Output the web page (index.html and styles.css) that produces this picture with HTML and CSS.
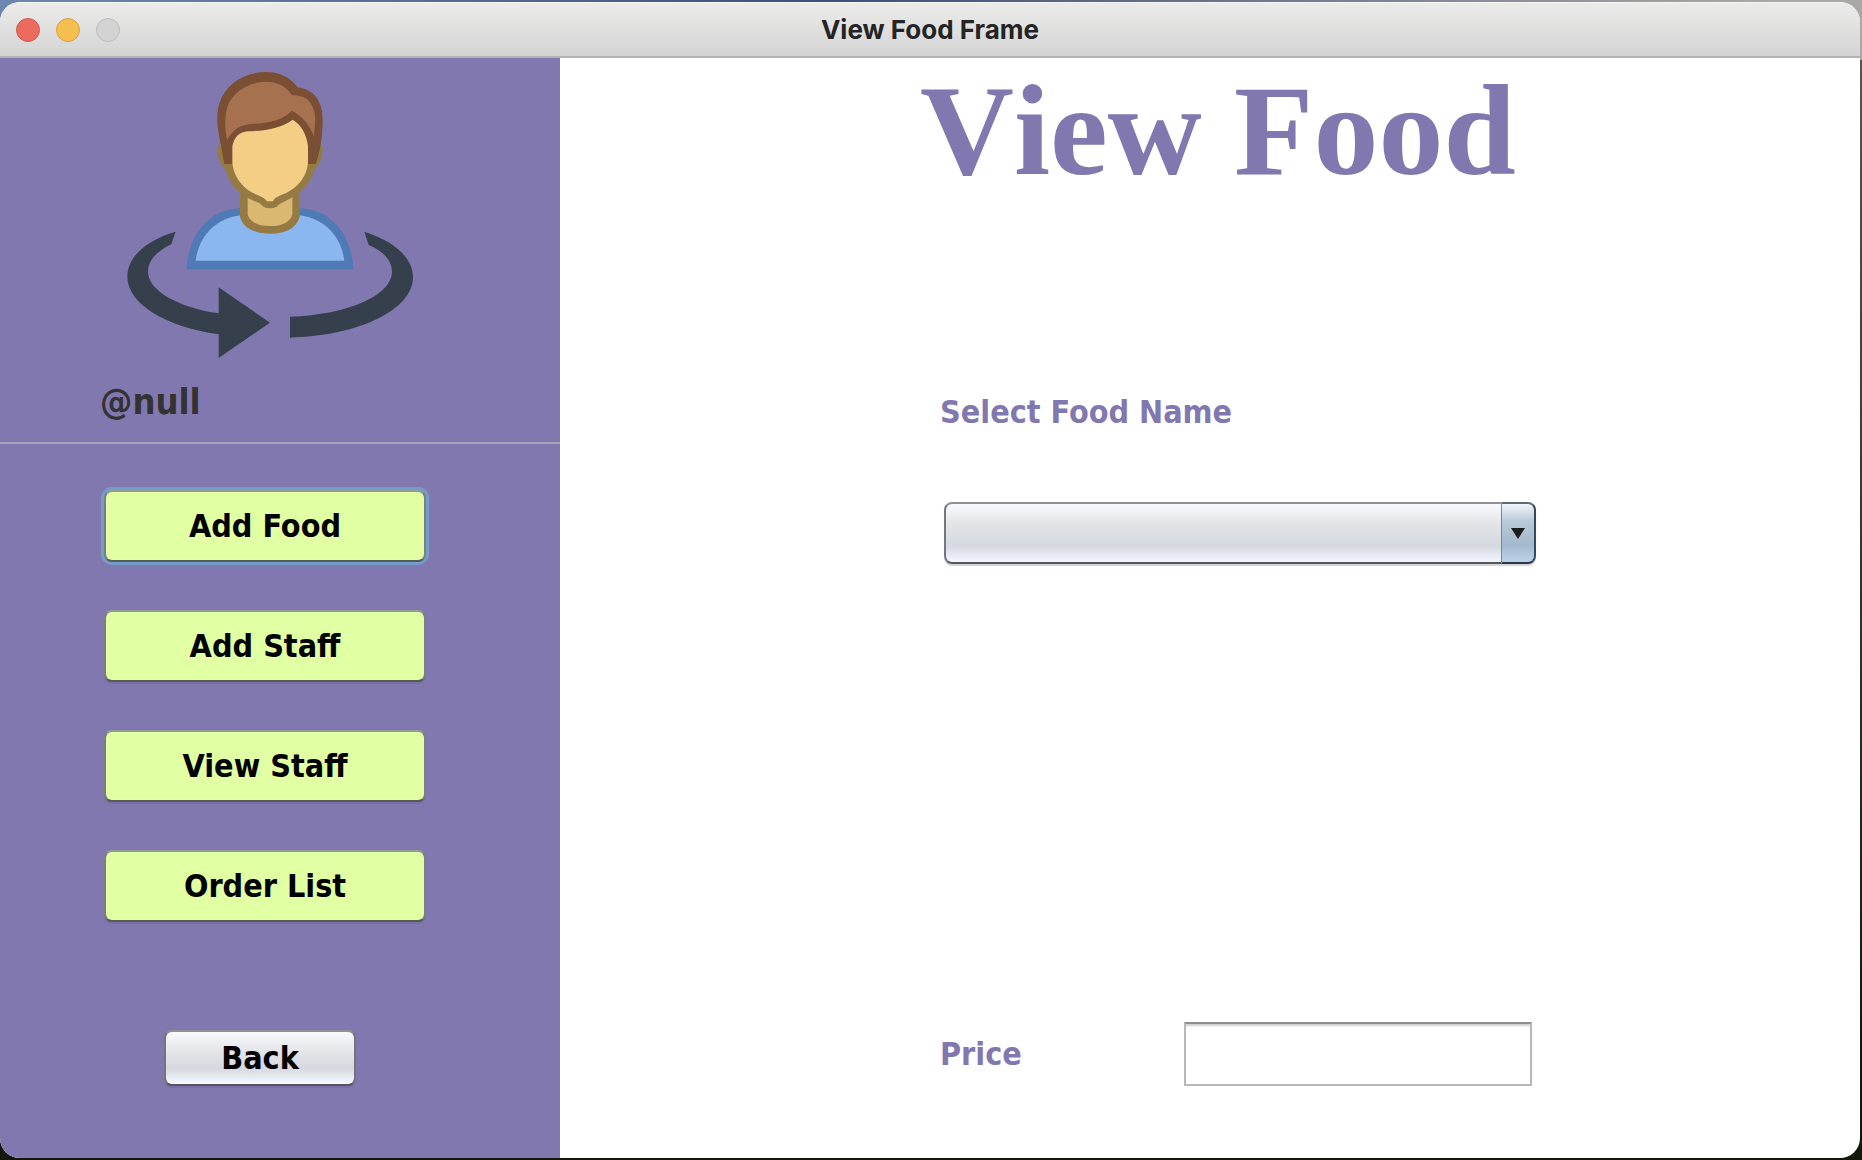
FILE: index.html
```html
<!DOCTYPE html>
<html lang="en">
<head>
<meta charset="utf-8">
<title>View Food Frame</title>
<link rel="stylesheet" href="styles.css">
</head>
<body>
<div class="window">
  <header class="titlebar">
    <div class="lights">
      <button class="light light-close" type="button" aria-label="Close"></button>
      <button class="light light-minimize" type="button" aria-label="Minimize"></button>
      <button class="light light-zoom" type="button" aria-label="Zoom" disabled></button>
    </div>
    <span class="window-title">View Food Frame</span>
  </header>
  <div class="content">
    <aside class="sidebar">
      <section class="profile">
        <svg class="avatar" viewBox="0 0 960 930" aria-hidden="true">
          <g fill="#36404d">
            <path d="M197 515C110 540 52 590 52 650C52 730 165 800 326 823V894L480 788L326 682V760C205 742 114 692 114 635C114 600 142 573 184 553Z"/>
            <path d="M763 515C850 542 909 592 909 652C909 750 745 828 540 833V770C715 764 846 705 846 635C846 600 818 573 776 555Z"/>
          </g>
          <path d="M230 628C235 520 300 444 400 444H560C660 444 725 520 730 628Z" fill="#4e7ab5"/>
          <path d="M257 602C267 525 320 475 392 466H568C640 475 693 525 703 602Z" fill="#8bb7f0"/>
          <path d="M390 390H569V470C560 505 525 521 480 521C435 521 399 505 390 470Z" fill="#967a44"/>
          <path d="M413 410H547V464C539 487 516 498 480 498C444 498 421 487 413 464Z" fill="#dbb872"/>
          <path d="M322 255C320 295 332 315 347 330C355 365 380 395 412 413C435 425 450 428 460 440Q480 450 500 440C510 428 530 423 550 410C580 395 602 365 614 330C634 305 640 285 637 255Z" fill="#967a44"/>
          <path d="M343 312L325 215C320 185 320 155 328 130C348 70 405 36 470 36C510 36 540 52 563 82C610 88 638 120 638 180C638 225 632 270 617 312Z" fill="#7a4f34"/>
          <path d="M352 240C342 205 344 160 356 130C378 90 420 66 470 65C505 66 530 80 546 106C590 104 614 130 616 180L612 230C600 195 575 166 545 152C520 180 475 190 430 191C390 192 365 212 352 240Z" fill="#a6714e"/>
          <path d="M367 258C374 230 388 216 414 214C470 212 515 204 548 179C575 195 590 225 594 258V308C590 350 565 380 530 398C505 408 492 413 489 424H471C464 412 445 407 425 397C392 377 370 345 367 308Z" fill="#f5ce85"/>
        </svg>
        <p class="username">@null</p>
      </section>
      <nav class="menu">
        <button class="btn btn-menu is-focused" type="button">Add Food</button>
        <button class="btn btn-menu" type="button">Add Staff</button>
        <button class="btn btn-menu" type="button">View Staff</button>
        <button class="btn btn-menu" type="button">Order List</button>
      </nav>
      <button class="btn btn-back" type="button">Back</button>
    </aside>
    <main class="main">
      <h1 class="heading">View Food</h1>
      <form class="form">
        <label class="label" for="food-name">Select Food Name</label>
        <div class="combo">
          <select class="combo-select" id="food-name"><option value=""></option></select>
          <span class="combo-arrow" aria-hidden="true">
            <svg class="arrow-icon" viewBox="0 0 14 11"><path d="M0 0H14L7 11Z" fill="#1c1c1c"/></svg>
          </span>
        </div>
        <div class="price-row">
          <label class="label" for="price">Price</label>
          <input class="price-input" id="price" type="text">
        </div>
      </form>
    </main>
  </div>
</div>
</body>
</html>
```
FILE: styles.css
```css
* {
  box-sizing: border-box;
}

body {
  margin: 0;
  min-height: 100vh;
  padding: 2px 2px 2px 0;
  display: flex;
  background: linear-gradient(to bottom, transparent 60px, #55564f 60px, #14180c 90%),
    linear-gradient(to right, #6d88b0, #405078 45%, #aaa8a4 95%);
  font-family: "DejaVu Sans Condensed", "Noto Sans", sans-serif;
}

.window {
  flex: 1;
  display: flex;
  flex-direction: column;
  border-radius: 20px;
  overflow: hidden;
  background: #fff;
}

.titlebar {
  height: 56px;
  display: grid;
  grid-template-columns: 1fr auto 1fr;
  align-items: center;
  padding: 0 16px;
  background: linear-gradient(#ebebea, #d4d4d4);
  border-top: 1px solid #f6f6f6;
  border-bottom: 2px solid #b4b2b4;
}

.lights {
  display: flex;
  gap: 16px;
}

.light {
  width: 24px;
  height: 24px;
  padding: 0;
  border: 1px solid #bdbdbd;
  border-radius: 50%;
  background: #d3d3d3;
}

.light-close {
  background: #ed6a5f;
  border-color: #d05a50;
}

.light-minimize {
  background: #f5bf4f;
  border-color: #d6a243;
}

.window-title {
  font: 700 26px/32px "Inter", sans-serif;
  color: #242424;
}

.content {
  flex: 1;
  display: flex;
}

.sidebar {
  flex: 0 0 560px;
  display: flex;
  flex-direction: column;
  align-items: flex-start;
  padding-bottom: 72px;
  background: #8278b0;
}

.profile {
  align-self: stretch;
  padding: 2px 100px 16px;
  border-bottom: 2px solid #a8a1b9;
}

.avatar {
  display: block;
  width: 320px;
  height: 310px;
  margin-left: 10px;
}

.username {
  margin: 8px 0 0;
  font-size: 36px;
  font-weight: 700;
  line-height: 48px;
  color: #333;
}

.menu {
  display: flex;
  flex-direction: column;
  gap: 48px;
  padding: 46px 104px 48px;
}

.btn {
  padding: 0;
  border: 2px solid;
  border-color: #8f8f95 #74747c #54545c;
  border-radius: 8px;
  font: 700 32px/40px "DejaVu Sans Condensed", "Noto Sans", sans-serif;
  color: #000;
  box-shadow: 0 2px 1px #786ea3;
}

.btn-menu {
  width: 322px;
  height: 72px;
  background: #e1ffa3;
  border-color: #949a94 #7c7f80 #555b56;
}

.is-focused {
  box-shadow: 0 0 0 3px #739ccb;
}

.btn-back {
  width: 192px;
  height: 56px;
  margin: auto 0 0 164px;
  background: linear-gradient(#f8f9fb, #e2e4e8 40%, #d5d8df 70%, #f6f9ff);
}

.main {
  flex: 1;
  display: flex;
  flex-direction: column;
  padding: 0 40px 72px 360px;
}

.heading {
  margin: 0;
  font: 700 130px/144px "Liberation Serif", "Times New Roman", serif;
  font-kerning: none;
  color: #8278b0;
}

.form {
  flex: 1;
  display: flex;
  flex-direction: column;
  align-items: flex-start;
  padding: 190px 0 0 20px;
}

.label {
  font-size: 32px;
  font-weight: 700;
  line-height: 40px;
  color: #8278b0;
}

.combo {
  display: flex;
  width: 592px;
  height: 62px;
  margin: 70px 0 0 4px;
  border-radius: 8px;
  box-shadow: 0 2px 1px #d4d4d4;
}

.combo-select {
  flex: 1;
  appearance: none;
  margin: 0;
  padding: 0 12px;
  border: 2px solid;
  border-color: #8f9095 #8f9095 #54565c #74767c;
  border-right: 0;
  border-radius: 8px 0 0 8px;
  background: linear-gradient(#f9fafd, #e2e4e8 35%, #d5d8df 72%, #f3f6ff);
  font: inherit;
}

.combo-arrow {
  width: 35px;
  display: grid;
  place-items: center;
  border: 2px solid;
  border-color: #5d6c7a #36495c #26374a #72889c;
  border-left-width: 1px;
  border-radius: 0 8px 8px 0;
  background: linear-gradient(#f0f5fa, #b8c9d7 30%, #a3b9ce 70%, #bbd3ea);
}

.arrow-icon {
  width: 14px;
  height: 11px;
}

.price-row {
  display: grid;
  grid-template-columns: 244px 348px;
  align-items: center;
  margin-top: auto;
}

.price-input {
  height: 64px;
  padding: 0 12px;
  border: 2px solid #b8b8b8;
  border-top-color: #8f8f8f;
  background: #fff;
  box-shadow: inset 0 3px 2px -1px #d0d0d0;
  font: inherit;
  font-size: 32px;
}
```
